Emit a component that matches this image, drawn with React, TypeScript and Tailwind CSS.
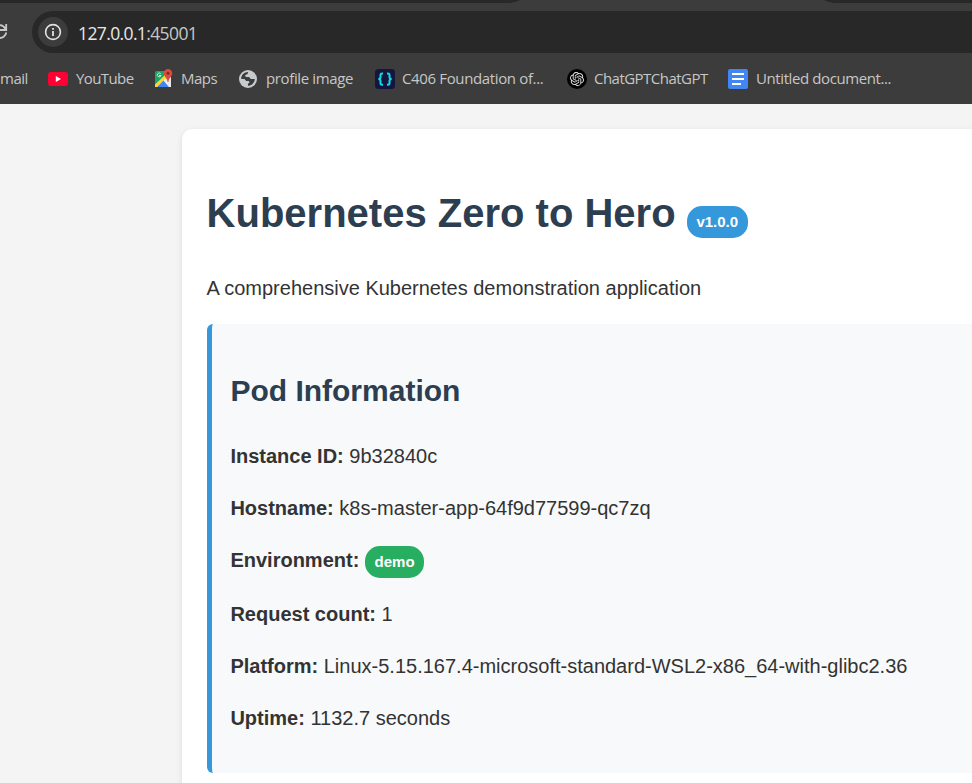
import React from "react";

type BookmarkProps = {
  label: string;
  icon?: React.ReactNode;
  itemClass: string;
  textClass: string;
};

function Bookmark({ label, icon, itemClass, textClass }: BookmarkProps) {
  return (
    <div className={`flex shrink-0 items-center whitespace-nowrap ${itemClass}`}>
      {icon}
      <span className={textClass}>{label}</span>
    </div>
  );
}

function YouTubeIcon() {
  return (
    <svg className="shrink-0" width="20" height="20" viewBox="0 0 20 20">
      <rect y="3" width="20" height="14" rx="3" fill="#ff0033" />
      <path d="M7.8 7 13 10l-5.2 3z" fill="#fff" />
    </svg>
  );
}

function MapsIcon() {
  return (
    <svg className="shrink-0" width="20" height="20" viewBox="0 0 20 20">
      <path d="M1 3.5A1.5 1.5 0 0 1 2.5 2H12v8L1 18z" fill="#1fa463" />
      <path d="M9 10 17 8v10H13z" fill="#e8e8e8" />
      <path d="M2 18 9.5 11.5 15 18z" fill="#4285f4" />
      <path d="M1 15.5 11 6l2 3.2L3.5 18H1z" fill="#fdd835" />
      <path d="M3.3 18 9.5 11.5 15 18z" fill="#4285f4" />
      <path d="M9.5 11.5 12.3 9.2 17 17v1h-2z" fill="#ededed" />
      <path d="M6.7 4.8A1.9 1.9 0 1 0 7 6.6H5" fill="none" stroke="#d5f0df" strokeWidth="1" />
      <path d="M14 0a4.2 4.2 0 0 1 4.2 4.2c0 3.3-3.3 4.4-3.8 8.8h-.8c-.5-4.4-3.8-5.5-3.8-8.8A4.2 4.2 0 0 1 14 0z" fill="#dc4b3e" />
      <circle cx="14" cy="4.2" r="1.5" fill="#8b2720" />
    </svg>
  );
}

function GlobeIcon() {
  return (
    <svg className="shrink-0" width="20" height="20" viewBox="0 0 20 20">
      <circle cx="10" cy="10" r="9" fill="#c7cacf" />
      <path d="M10.2 3c-.6 1 .1 1.7-1 2.3-.9.4-1.9.2-2 1.3-.1.8.4 1.3 1.2 1.4h2.3c1.3 0 1 1.8 2.2 1.9h3.9c-.2 3.9-3.1 6.8-7 6.9v-1.5c0-1 1.6-.8 1.6-2 0-1-.7-1.4-1.7-1.4H8.2c-1 0-1.1-1.4-2.1-1.9H3.2C3.1 6.1 6 3.1 10.2 3z" fill="#3c3c3c" />
      <path d="M3.1 10H6l2.4 2.3v1.5l1.3 1v2.1A6.8 6.8 0 0 1 3.1 10zM11.7 3.2a6.9 6.9 0 0 1 5.1 5.2l-2.2.1c-.9 0-1-.7-1-1.4-.2-1.1-1.9-.7-2.1-1.8z" fill="#c7cacf" />
    </svg>
  );
}

function BracesIcon() {
  return (
    <svg className="shrink-0" width="20" height="20" viewBox="0 0 20 20">
      <rect width="20" height="20" rx="3.5" fill="#14163f" />
      <path d="M8 4.5H7Q5.5 4.5 5.5 6v2Q5.5 10 3.3 10 5.5 10 5.5 12v2q0 1.7 1.5 1.7h1M12 4.5h1q1.5 0 1.5 1.5v2q0 2 2.2 2-2.2 0-2.2 2v2q0 1.7-1.5 1.7h-1" fill="none" stroke="#12d8df" strokeWidth="2" />
    </svg>
  );
}

function ChatGPTIcon() {
  return (
    <svg className="shrink-0" width="20" height="20" viewBox="0 0 20 20">
      <circle cx="10" cy="10" r="10" fill="#000" />
      <g transform="translate(3 3) scale(.5833)" fill="#e4e4e4">
        <path d="M22.282 9.821a6 6 0 0 0-.516-4.91 6.05 6.05 0 0 0-6.51-2.9A6.065 6.065 0 0 0 4.981 4.18a6 6 0 0 0-3.998 2.9 6.05 6.05 0 0 0 .743 7.097 5.98 5.98 0 0 0 .51 4.911 6.05 6.05 0 0 0 6.515 2.9A6 6 0 0 0 13.26 24a6.06 6.06 0 0 0 5.772-4.206 6 6 0 0 0 3.997-2.9 6.06 6.06 0 0 0-.747-7.073M13.26 22.43a4.48 4.48 0 0 1-2.876-1.04l.141-.081 4.779-2.758a.8.8 0 0 0 .392-.681v-6.737l2.02 1.168a.07.07 0 0 1 .038.052v5.583a4.504 4.504 0 0 1-4.494 4.494M3.6 18.304a4.47 4.47 0 0 1-.535-3.014l.142.085 4.783 2.759a.77.77 0 0 0 .78 0l5.843-3.369v2.332a.08.08 0 0 1-.033.062L9.74 19.95a4.5 4.5 0 0 1-6.14-1.646M2.34 7.896a4.5 4.5 0 0 1 2.366-1.973V11.6a.77.77 0 0 0 .388.677l5.815 3.354-2.02 1.168a.08.08 0 0 1-.071 0l-4.83-2.786A4.504 4.504 0 0 1 2.34 7.872zm16.597 3.855-5.833-3.387L15.119 7.2a.08.08 0 0 1 .071 0l4.83 2.791a4.494 4.494 0 0 1-.676 8.105v-5.678a.79.79 0 0 0-.407-.667m2.01-3.023-.141-.085-4.774-2.782a.78.78 0 0 0-.785 0L9.409 9.23V6.897a.07.07 0 0 1 .028-.061l4.83-2.787a4.5 4.5 0 0 1 6.68 4.66zm-12.64 4.135-2.02-1.164a.08.08 0 0 1-.038-.057V6.075a4.5 4.5 0 0 1 7.375-3.453l-.142.08L8.704 5.46a.8.8 0 0 0-.393.681zm1.097-2.365 2.602-1.5 2.607 1.5v2.999l-2.597 1.5-2.607-1.5z" />
      </g>
    </svg>
  );
}

function DocsIcon() {
  return (
    <svg className="shrink-0" width="20" height="20" viewBox="0 0 20 20">
      <rect width="20" height="20" rx="2" fill="#4285f4" />
      <path d="M4 5h12M4 10h12M4 15h9" stroke="#fff" strokeWidth="2.2" />
    </svg>
  );
}

function BrowserChrome() {
  return (
    <header className="h-[104px] overflow-hidden bg-[#3c3c3c] font-['Open_Sans','Noto_Sans',sans-serif] text-[#c7c7c7]">
      <svg className="block" width="972" height="11">
        <path d="M0 0H520Q515 3 509 3H0zM824 0H972V3H835Q829 3 824 0z" fill="#282828" />
      </svg>
      <div className="flex h-[42px] items-center">
        <div className="w-8 shrink-0">
          <svg width="10" height="20" viewBox="0 0 10 20" fill="none" stroke="#c7c7c7" strokeWidth="1.8">
            <path d="M-1 3.2A6.8 6.8 0 0 1 5.5 7M6.2 2v6H0M6.3 10.5A6.8 6.8 0 0 1-1 16" />
          </svg>
        </div>
        <div className="flex h-[42px] flex-1 items-center rounded-l-full bg-[#282828] pl-1.5">
          <div className="flex h-[30px] w-[30px] items-center justify-center rounded-full bg-[#3c3c3c]">
            <svg width="18" height="18" viewBox="0 0 18 18" fill="none" stroke="#e3e3e3">
              <circle cx="9" cy="9" r="7.4" strokeWidth="1.6" />
              <path d="M9 8v5M9 5v1.8" strokeWidth="1.8" />
            </svg>
          </div>
          <span className="ml-[10px] whitespace-nowrap pt-px text-[17.5px] leading-6 tracking-[-0.62px] text-[#e8e8e8]">
            127.0.0.1<span className="text-[#c7c7c7]">:45001</span>
          </span>
        </div>
      </div>
      <nav className="flex h-[51px] items-center text-[15px]">
        <Bookmark label="mail" itemClass="w-12" textClass="tracking-[-0.5px]" />
        <Bookmark label="YouTube" icon={<YouTubeIcon />} itemClass="w-[106px] gap-2" textClass="tracking-[-0.6px]" />
        <Bookmark label="Maps" icon={<MapsIcon />} itemClass="w-[84px] gap-[7px]" textClass="tracking-[-0.5px]" />
        <Bookmark label="profile image" icon={<GlobeIcon />} itemClass="w-[137px] gap-2" textClass="tracking-[-0.37px]" />
        <Bookmark label="C406 Foundation of..." icon={<BracesIcon />} itemClass="w-48 gap-[7px]" textClass="tracking-[-0.36px]" />
        <Bookmark label="ChatGPTChatGPT" icon={<ChatGPTIcon />} itemClass="w-[161px] gap-[7px]" textClass="tracking-[-0.53px]" />
        <Bookmark label="Untitled document..." icon={<DocsIcon />} itemClass="gap-2" textClass="tracking-[-0.4px]" />
      </nav>
    </header>
  );
}

function Badge({ children, color }: { children: React.ReactNode; color: string }) {
  return (
    <span className={`inline-block h-8 rounded-[15px] px-[9.7px] text-[15px] leading-8 font-bold text-white ${color}`}>
      {children}
    </span>
  );
}

function Row({ label, children }: { label: string; children: React.ReactNode }) {
  return (
    <p className="mb-5 h-8 whitespace-nowrap">
      <strong>{label}:</strong> {children}
    </p>
  );
}

export default function App() {
  return (
    <div className="h-[783px] w-[972px] overflow-hidden bg-[#f4f4f4] font-['Liberation_Sans',Arial,sans-serif]">
      <BrowserChrome />
      <main className="mt-[25px] ml-[182px] h-[800px] w-[1000px] rounded-[10px] bg-white px-[25px] pt-[52px] text-[20px] leading-8 text-[#333] shadow-[0_2px_6px_rgba(0,0,0,0.1)]">
        <h1 className="-ml-[0.4px] h-16 text-[40px] leading-[64px] font-bold whitespace-nowrap text-[#2c3e50]">
          Kubernetes Zero to Hero <Badge color="bg-[#3498db]">v1.0.0</Badge>
        </h1>
        <p className="mt-[27px] -ml-[0.6px]">A comprehensive Kubernetes demonstration application</p>
        <section className="mt-5 h-[449px] rounded-[6px] border-l-[5px] border-[#3498db] bg-[#f8f9fa] pt-[43px] pl-[18.4px]">
          <h2 className="mb-[25px] text-[30px] leading-[48px] font-bold text-[#2c3e50]">Pod Information</h2>
          <Row label="Instance ID">9b32840c</Row>
          <Row label="Hostname">k8s-master-app-64f9d77599-qc7zq</Row>
          <p className="mb-5 h-[34px] whitespace-nowrap">
            <strong>Environment:</strong> <Badge color="bg-[#27ae60]">demo</Badge>
          </p>
          <Row label="Request count">1</Row>
          <Row label="Platform">Linux-5.15.167.4-microsoft-standard-WSL2-x86_64-with-glibc2.36</Row>
          <Row label="Uptime">1132.7 seconds</Row>
        </section>
      </main>
    </div>
  );
}
